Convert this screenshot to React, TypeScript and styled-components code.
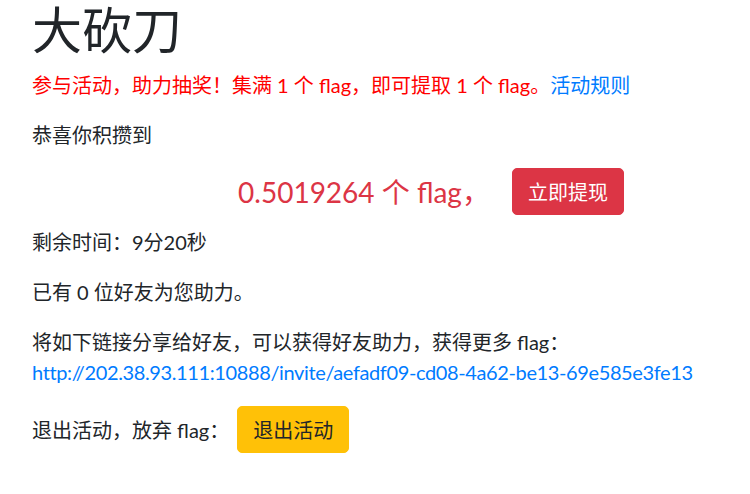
import React from "react";
import styled, { createGlobalStyle } from "styled-components";

const Global = createGlobalStyle`
  html { font-size: 20px; }
  body {
    margin: 0;
    background: #fff;
    color: #212529;
    font-family: "Lato", "Noto Sans CJK SC", sans-serif;
    font-size: 20px;
    line-height: 1.5;
  }
`;

const Container = styled.div`
  padding: 0 32px;
`;

const Title = styled.h1`
  margin: 0 0 10px;
  font-size: 50px;
  font-weight: 400;
  line-height: 60px;
  color: #212529;
`;

const Para = styled.p<{ $mb?: number; $color?: string }>`
  margin: 0 0 ${(p) => (p.$mb ?? 20)}px;
  line-height: 30px;
  color: ${(p) => p.$color ?? "#212529"};
`;

const Link = styled.a<{ $nowrap?: boolean }>`
  color: #007bff;
  text-decoration: none;
  white-space: ${(p) => (p.$nowrap ? "nowrap" : "normal")};
  letter-spacing: ${(p) => (p.$nowrap ? "-0.38px" : "normal")};
`;

const AmountRow = styled.div`
  display: flex;
  align-items: center;
  justify-content: center;
  height: 47px;
  margin: -2px 0 12px;
  padding-left: 112px;
`;

const Amount = styled.span`
  font-size: 28px;
  line-height: 34px;
  color: #dc3545;
  margin-right: 22px;
`;

const Button = styled.button<{ $variant: "danger" | "warning" }>`
  display: inline-block;
  font-family: inherit;
  font-size: 20px;
  line-height: 30px;
  padding: 7.5px 15px;
  border: 1px solid ${(p) => (p.$variant === "danger" ? "#dc3545" : "#ffc107")};
  background: ${(p) => (p.$variant === "danger" ? "#dc3545" : "#ffc107")};
  color: ${(p) => (p.$variant === "danger" ? "#fff" : "#212529")};
  border-radius: 5px;
  cursor: pointer;
`;

const ExitRow = styled.div`
  display: flex;
  align-items: center;
  height: 47px;
  margin-top: -1px;
  gap: 8px;
`;

export default function App() {
  return (
    <Container>
      <Global />
      <Title>大砍刀</Title>
      <Para $color="#ff0000">
        参与活动，助力抽奖！集满 1 个 flag，即可提取 1 个 flag。<Link href="#">活动规则</Link>
      </Para>
      <Para $mb={20}>恭喜你积攒到</Para>
      <AmountRow>
        <Amount>0.5019264 个 flag，</Amount>
        <Button $variant="danger">立即提现</Button>
      </AmountRow>
      <Para>剩余时间：9分20秒</Para>
      <Para>已有 0 位好友为您助力。</Para>
      <Para>
        将如下链接分享给好友，可以获得好友助力，获得更多 flag：
        <br />
        <Link href="#" $nowrap>
          http://202.38.93.111:10888/invite/aefadf09-cd08-4a62-be13-69e585e3fe13
        </Link>
      </Para>
      <ExitRow>
        <span>退出活动，放弃 flag：</span>
        <Button $variant="warning">退出活动</Button>
      </ExitRow>
    </Container>
  );
}
